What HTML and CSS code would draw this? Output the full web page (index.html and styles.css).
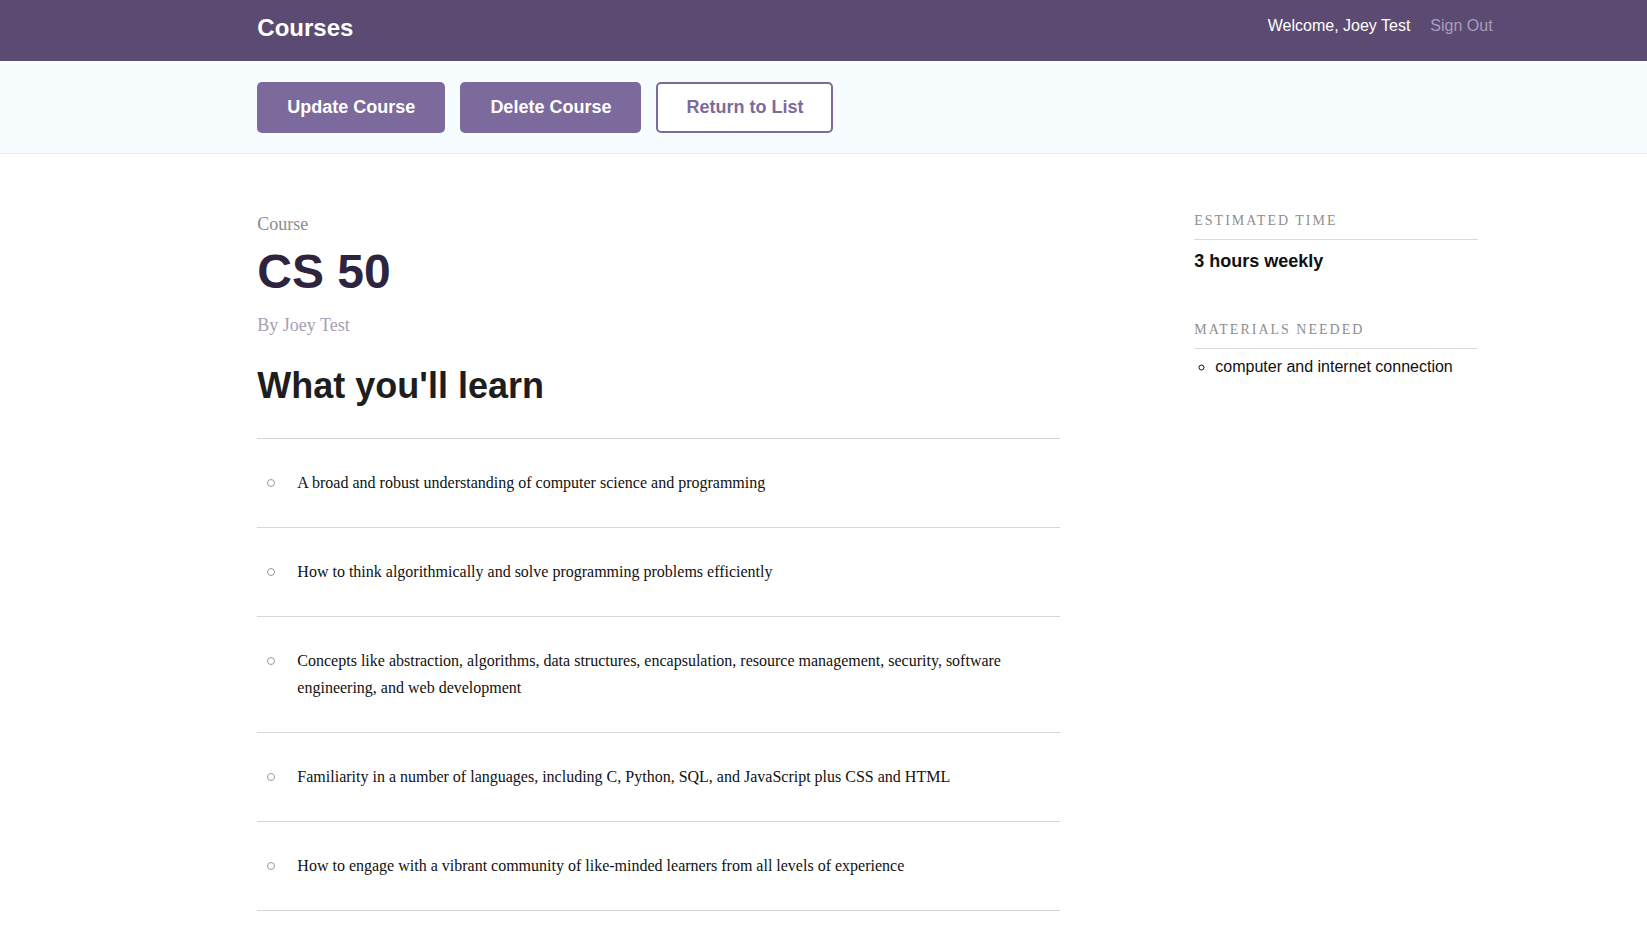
FILE: index.html
```html
<!DOCTYPE html>
<html lang="en">
<head>
<meta charset="utf-8">
<title>Courses</title>
<link rel="stylesheet" href="styles.css">
</head>
<body>
<header class="header">
  <div class="header-title">Courses</div>
  <nav class="header-nav">
    <span class="welcome">Welcome, Joey Test</span>
    <a class="signout" href="#">Sign Out</a>
  </nav>
</header>
<div class="actions-bar">
  <a class="button" href="#">Update Course</a>
  <a class="button" href="#">Delete Course</a>
  <a class="button button-secondary" href="#">Return to List</a>
</div>
<div class="details">
  <section class="course-main">
    <div class="course-label">Course</div>
    <h1 class="course-title">CS 50</h1>
    <p class="course-author">By Joey Test</p>
    <h2 class="course-subtitle">What you'll learn</h2>
    <ul class="learn-list">
      <li>A broad and robust understanding of computer science and programming</li>
      <li>How to think algorithmically and solve programming problems efficiently</li>
      <li>Concepts like abstraction, algorithms, data structures, encapsulation, resource management, security, software engineering, and web development</li>
      <li>Familiarity in a number of languages, including C, Python, SQL, and JavaScript plus CSS and HTML</li>
      <li>How to engage with a vibrant community of like-minded learners from all levels of experience</li>
    </ul>
  </section>
  <aside class="course-side">
    <h4 class="side-heading">Estimated Time</h4>
    <div class="side-value">3 hours weekly</div>
    <h4 class="side-heading side-heading-second">Materials Needed</h4>
    <ul class="materials">
      <li>computer and internet connection</li>
    </ul>
  </aside>
</div>
</body>
</html>
```
FILE: styles.css
```css
* { box-sizing: border-box; }

body {
  margin: 0;
  font-family: "Liberation Sans", Arial, sans-serif;
  background: #ffffff;
  color: #111;
}

.header {
  height: 61px;
  background: #5b4a71;
  display: flex;
  justify-content: space-between;
  align-items: flex-start;
  padding: 0 9.375% 0 15.625%;
}

.header-title {
  color: #ffffff;
  font-weight: bold;
  font-size: 24px;
  line-height: 28px;
  margin-top: 14px;
}

.header-nav {
  display: flex;
  gap: 20px;
  margin-top: 17px;
  font-size: 16px;
  line-height: 18px;
}

.welcome { color: #ffffff; }

.signout {
  color: #a99dbb;
  text-decoration: none;
}

.actions-bar {
  display: flex;
  gap: 15px;
  background: #f7fcff;
  border-bottom: 1px solid #dcf0f5;
  padding: 21px 9.375% 20px 15.625%;
}

.button {
  display: block;
  background: #7c6a9c;
  color: #ffffff;
  font-weight: bold;
  font-size: 18px;
  line-height: 21px;
  padding: 15px 30px;
  border-radius: 5px;
  text-decoration: none;
}

.button-secondary {
  background: #ffffff;
  color: #7c6a9c;
  border: 2px solid #7c6a9c;
  padding: 13px 28px;
}

.details {
  display: grid;
  grid-template-columns: 65% 23%;
  column-gap: 10.85%;
  padding: 0 9.375% 0 15.625%;
}

.course-main {
  padding-top: 59px;
}

.course-label {
  font-family: "Liberation Serif", "Times New Roman", serif;
  font-size: 18px;
  line-height: 22px;
  color: #8c8c8c;
}

.course-title {
  margin: 9px 0 0;
  font-size: 48px;
  line-height: 56px;
  font-weight: bold;
  color: #2d2540;
}

.course-author {
  margin: 14px 0 0;
  font-family: "Liberation Serif", "Times New Roman", serif;
  font-size: 18px;
  line-height: 22px;
  color: #a89eb6;
}

.course-subtitle {
  margin: 29px 0 0;
  font-size: 36px;
  line-height: 42px;
  font-weight: bold;
  color: #1e1e1e;
}

.learn-list {
  list-style: none;
  margin: 31px 0 0;
  padding: 0;
  border-top: 1px solid #d6d6d6;
}

.learn-list li {
  display: flex;
  font-family: "Liberation Serif", "Times New Roman", serif;
  font-size: 16px;
  line-height: 27px;
  color: #111;
  padding: 30px 0 31px;
  border-bottom: 1px solid #d6d6d6;
}

.learn-list li::before {
  content: "";
  flex-shrink: 0;
  width: 6px;
  height: 6px;
  border: 1px solid #9a9a9a;
  border-radius: 50%;
  margin: 10px 22px 0 10px;
}

.course-side {
  padding-top: 57px;
}

.side-heading {
  margin: 0;
  font-family: "Liberation Serif", "Times New Roman", serif;
  font-weight: normal;
  font-size: 14px;
  line-height: 20px;
  letter-spacing: 2px;
  text-transform: uppercase;
  color: #8e8e8e;
  padding-bottom: 8px;
  border-bottom: 1px solid #dadada;
}

.side-heading-second {
  margin-top: 48px;
}

.side-value {
  margin-top: 10px;
  font-weight: bold;
  font-size: 18px;
  line-height: 22px;
  color: #111;
}

.materials {
  margin: 8px 0 0;
  padding-left: 21px;
  list-style: circle;
  font-size: 16px;
  line-height: 20px;
  color: #111;
}
```
